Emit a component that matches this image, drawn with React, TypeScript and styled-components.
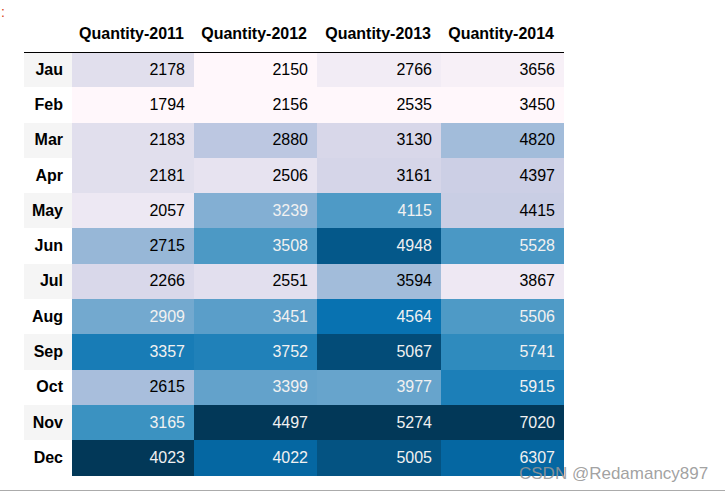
import React from 'react';
import styled, { createGlobalStyle } from 'styled-components';

const GlobalStyle = createGlobalStyle`
  html, body {
    margin: 0;
    padding: 0;
    background: #ffffff;
  }
  body {
    font-family: 'Liberation Sans', Arial, sans-serif;
  }
`;

const MONTHS = ['Jau', 'Feb', 'Mar', 'Apr', 'May', 'Jun', 'Jul', 'Aug', 'Sep', 'Oct', 'Nov', 'Dec'];
const YEARS = ['Quantity-2011', 'Quantity-2012', 'Quantity-2013', 'Quantity-2014'];
const COL_WIDTHS = [48, 122, 123, 124, 123];

// rows = months, columns = years
const DATA = [
  [2178, 2150, 2766, 3656],
  [1794, 2156, 2535, 3450],
  [2183, 2880, 3130, 4820],
  [2181, 2506, 3161, 4397],
  [2057, 3239, 4115, 4415],
  [2715, 3508, 4948, 5528],
  [2266, 2551, 3594, 3867],
  [2909, 3451, 4564, 5506],
  [3357, 3752, 5067, 5741],
  [2615, 3399, 3977, 5915],
  [3165, 4497, 5274, 7020],
  [4023, 4022, 5005, 6307],
];

// PuBu, same stops as matplotlib
const PUBU = ['#fff7fb', '#ece7f2', '#d0d1e6', '#a6bddb', '#74a9cf', '#3690c0', '#0570b0', '#045a8d', '#023858'];

const hexToRgb = (hex: string) => [1, 3, 5].map((i) => parseInt(hex.slice(i, i + 2), 16));

const pubu = (t: number) => {
  const idx = Math.min(Math.floor(Math.max(t, 0) * 256), 255) / 255;
  const x = idx * (PUBU.length - 1);
  const i = Math.min(Math.floor(x), PUBU.length - 2);
  const f = x - i;
  const a = hexToRgb(PUBU[i]);
  const b = hexToRgb(PUBU[i + 1]);
  return a.map((v, k) => v + (b[k] - v) * f);
};

const luminance = (rgb: number[]) => {
  const lin = rgb.map((v) => {
    const c = v / 255;
    return c <= 0.03928 ? c / 12.92 : Math.pow((c + 0.055) / 1.055, 2.4);
  });
  return 0.2126 * lin[0] + 0.7152 * lin[1] + 0.0722 * lin[2];
};

const cellStyle = (value: number, col: number) => {
  const values = DATA.map((r) => r[col]);
  const min = Math.min(...values);
  const max = Math.max(...values);
  const rgb = pubu((value - min) / (max - min));
  return {
    background: `rgb(${rgb.map((v) => Math.round(v)).join(',')})`,
    color: luminance(rgb) < 0.408 ? '#f1f1f1' : '#000000',
  };
};

const Page = styled.div`
  position: relative;
  width: 725px;
  height: 496px;
  overflow: hidden;
`;

const Output = styled.div`
  display: flex;
  align-items: flex-start;
  height: 490px;
  border-bottom: 1px solid #ababab;
`;

const Prompt = styled.div`
  width: 24px;
  flex: none;
  padding: 2px 0 0 1px;
  box-sizing: border-box;
  color: #d84315;
  font-size: 14px;
  line-height: 20px;
`;

const DataTable = styled.table`
  margin-top: 17px;
  border-collapse: collapse;
  border-spacing: 0;
  table-layout: fixed;
  font-size: 16px;
  color: #000000;
`;

const HeadCell = styled.th`
  height: 35px;
  padding: 0 10px 0 0;
  box-sizing: border-box;
  text-align: right;
  vertical-align: middle;
  font-weight: bold;
  white-space: nowrap;
  border-bottom: 1px solid #000000;
`;

const BodyRow = styled.tr`
  height: 35.3px;
`;

const RowHead = styled.th<{ $odd: boolean }>`
  padding: 0 9px 0 0;
  text-align: right;
  vertical-align: middle;
  font-weight: bold;
  background: ${(p) => (p.$odd ? '#f5f5f5' : '#ffffff')};
`;

const ValueCell = styled.td`
  padding: 0 9px 0 0;
  text-align: right;
  vertical-align: middle;
`;

const Watermark = styled.div`
  position: absolute;
  left: 519px;
  top: 463px;
  font-size: 17px;
  line-height: 22px;
  color: rgba(150, 150, 150, 0.9);
  white-space: nowrap;
  pointer-events: none;
`;

const App = () => {
  return (
    <Page>
      <GlobalStyle />
      <Output>
        <Prompt>:</Prompt>
        <DataTable>
          <colgroup>
            {COL_WIDTHS.map((w, i) => (
              <col key={i} style={{ width: w }} />
            ))}
          </colgroup>
          <thead>
            <tr>
              <HeadCell />
              {YEARS.map((y) => (
                <HeadCell key={y}>{y}</HeadCell>
              ))}
            </tr>
          </thead>
          <tbody>
            {DATA.map((row, r) => (
              <BodyRow key={MONTHS[r]}>
                <RowHead $odd={r % 2 === 0}>{MONTHS[r]}</RowHead>
                {row.map((v, c) => (
                  <ValueCell key={c} style={cellStyle(v, c)}>
                    {v}
                  </ValueCell>
                ))}
              </BodyRow>
            ))}
          </tbody>
        </DataTable>
      </Output>
      <Watermark>CSDN @Redamancy897</Watermark>
    </Page>
  );
};

export default App;
